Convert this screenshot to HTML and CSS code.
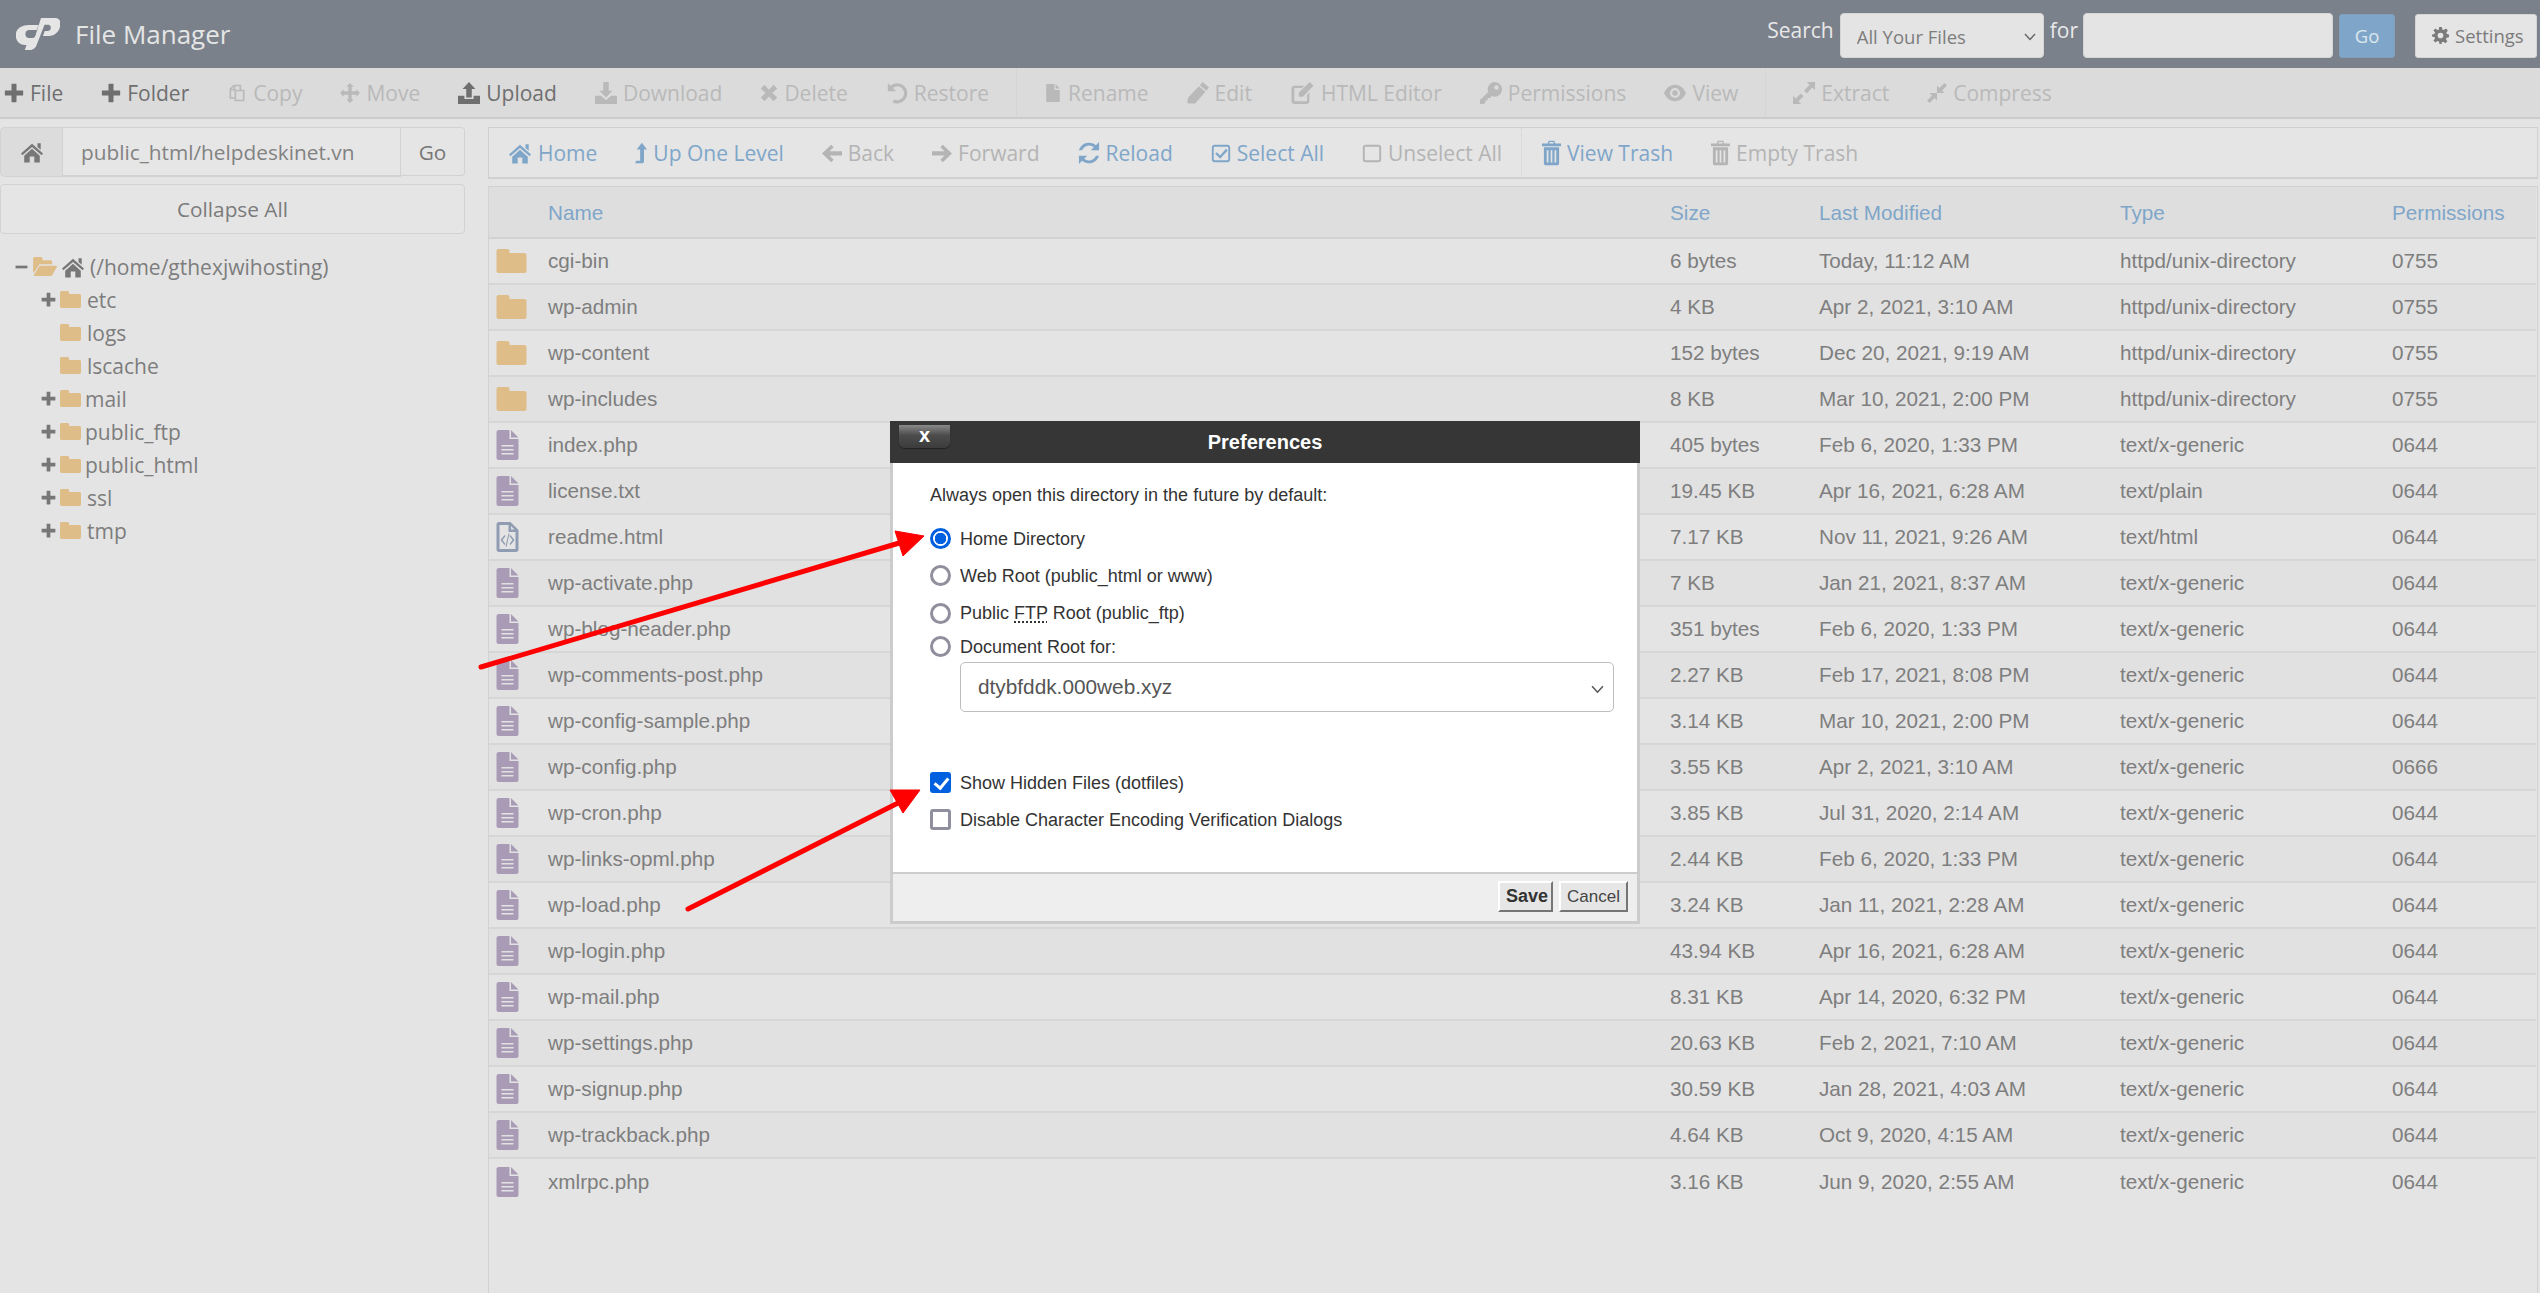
FILE: index.html
```html
<!DOCTYPE html>
<html lang="en">
<head>
<meta charset="utf-8">
<title>File Manager</title>
<link rel="stylesheet" href="styles.css">
</head>
<body>
<svg class="defs" width="0" height="0" aria-hidden="true">
  <symbol id="i-plus" viewBox="0 0 24 24"><path d="M9 1.5c0-.4.3-.5.6-.5h4.800c.3 0 .6.100.6.500V9h7.500c.3 0 .5.300.5.600v4.800c0 .3-.2.600-.5.600H15v7.500c0 .3-.3.500-.6.500H9.600c-.3 0-.6-.2-.6-.5V15H1.500c-.3 0-.5-.3-.5-.6V9.600c0-.3.200-.6.500-.6H9z"/></symbol>
  <symbol id="i-minus" viewBox="0 0 24 24"><path d="M1 9.500h22v5H1z"/></symbol>
  <symbol id="i-copy" viewBox="0 0 24 24"><path d="M9 2h8v6h4v14H9v-3H3V7l5-5zM8 4.500 5.500 7H8zM15 4h-5v5H5v8h4V8h6zM11 10v10h8V10z"/></symbol>
  <symbol id="i-move" viewBox="0 0 24 24"><path d="M12 0l4.500 4.500H14V10h5.500V7.500L24 12l-4.500 4.500V14H14v5.500h2.500L12 24l-4.500-4.500H10V14H4.500v2.500L0 12l4.500-4.500V10H10V4.500H7.500z"/></symbol>
  <symbol id="i-upload" viewBox="0 0 24 24"><path d="M12 0l7 7.500h-4V17H9V7.500H5zM0 15h7v3.500h10V15h7v9H0zM18 20.500h2v1.500h-2zM20.800 20.500h1.700v1.500h-1.700z"/></symbol>
  <symbol id="i-download" viewBox="0 0 24 24"><path d="M9 0h6v9.500h4L12 17 5 9.500h4zM0 15h6.500l5.500 5 5.500-5H24v9H0zM18 20.500h2v1.500h-2zM20.800 20.500h1.700v1.500h-1.700z"/></symbol>
  <symbol id="i-times" viewBox="0 0 24 24"><path d="M6 1l6 6.500L18 1l5 5-6.500 6 6.500 6-5 5-6-6.500L6 23l-5-5 6.500-6L1 6z"/></symbol>
  <symbol id="i-undo" viewBox="0 0 24 24"><path d="M2 1l3 3a11 11 0 1 1 2 18l2-3a7.500 7.500 0 1 0-1.500-12.500L11 10H2z"/></symbol>
  <symbol id="i-file" viewBox="0 0 24 24"><path d="M4 0h10v8h7v15a1 1 0 0 1-1 1H4a1 1 0 0 1-1-1V1a1 1 0 0 1 1-1zM15.500 0 21 6h-5.500z"/></symbol>
  <symbol id="i-pencil" viewBox="0 0 24 24"><path d="M17 0l7 6-3 3.500-7-6zM13 4.500l7 6-11 13H1.500L0 22l1.500-5.500z"/></symbol>
  <symbol id="i-edit" viewBox="0 0 24 24"><path d="M3 4h11l-2.500 2.500H4c-.5 0-1 .4-1 1V20c0 .6.500 1 1 1h12c.6 0 1-.4 1-1v-6l2.500-2.500V21c0 1.500-1.500 3-3 3H3c-1.500 0-3-1.500-3-3V7c0-1.500 1.500-3 3-3zM20 0l4 4-11.500 12H8v-4.500z"/></symbol>
  <symbol id="i-key" viewBox="0 0 24 24"><path d="M16 0a8 8 0 1 1-3 15.400L11 17.500H8.500V20H6v2.500L4 24H0v-4.500l9-8.500A8 8 0 0 1 16 0zm2 3.500a2.500 2.500 0 1 0 0 5 2.500 2.500 0 0 0 0-5z"/></symbol>
  <symbol id="i-eye" viewBox="0 0 24 24"><path fill-rule="evenodd" d="M12 3c6 0 10 4.500 12 9-2 4.500-6 9-12 9S2 16.500 0 12C2 7.500 6 3 12 3zm0 3.500a5.500 5.500 0 1 0 0 11 5.500 5.500 0 0 0 0-11zM12 9a3 3 0 1 1 0 6 3 3 0 0 1 0-6z"/></symbol>
  <symbol id="i-expand" viewBox="0 0 24 24"><path d="M24 0v9l-3-3-6 6.500-3-3L18 3l-3-3zM0 24v-9l3 3 5.500-5.500 3 3L6 21l3 3z"/></symbol>
  <symbol id="i-compress" viewBox="0 0 24 24"><path d="M12 3v9h9l-3-3 6-6-3-3-6 6zM12 12v9l-3-3-6 6-3-3 6-6-3-3z"/></symbol>
  <symbol id="i-home" viewBox="0 0 24 24"><path d="M12 3 24 13.500l-1.500 2L12 6.500 1.500 15.500 0 13.500zM18 2.500h3.500v7L18 6.500zM12 8.500l8.500 7.500v7.500h-6V17h-5v6.500h-6V16z"/></symbol>
  <symbol id="i-up" viewBox="0 0 14 24"><path d="M8 0l6 8h-3.500v13.500c0 1.500-1 2.500-2.500 2.500H0l1.500-3h4.500V8H2z"/></symbol>
  <symbol id="i-left" viewBox="0 0 24 24"><path d="M11 2l3 3-5 5h15v5H9l5 5-3 3L0 12.500z"/></symbol>
  <symbol id="i-right" viewBox="0 0 24 24"><path d="M13 2l-3 3 5 5H0v5h15l-5 5 3 3 11-10.500z"/></symbol>
  <symbol id="i-reload" viewBox="0 0 24 24"><path d="M23 0v9h-9l3.200-3.200A8 8 0 0 0 4.500 9H1A11.500 11.500 0 0 1 19.500 3.500zM1 24v-9h9l-3.200 3.200A8 8 0 0 0 19.500 15H23A11.500 11.500 0 0 1 4.500 20.500z"/></symbol>
  <symbol id="i-check" viewBox="0 0 24 24"><path d="M4 2h16c1.500 0 3 1.500 3 3v15c0 1.500-1.500 3-3 3H4c-1.500 0-3-1.500-3-3V5c0-1.500 1.500-3 3-3zm0 2.500c-.4 0-.7.300-.7.700V20c0 .3.300.6.700.6h16c.4 0 .7-.3.700-.6V5.200c0-.4-.3-.7-.7-.7zM18 7l2 2-9 10-6-6 2-2 4 4z"/></symbol>
  <symbol id="i-square" viewBox="0 0 24 24"><path d="M4 2h16c1.500 0 3 1.500 3 3v15c0 1.500-1.500 3-3 3H4c-1.500 0-3-1.500-3-3V5c0-1.500 1.500-3 3-3zm0 2.500c-.4 0-.7.300-.7.700V20c0 .3.300.6.700.6h16c.4 0 .7-.3.700-.6V5.200c0-.4-.3-.7-.7-.7z"/></symbol>
  <symbol id="i-trash" viewBox="0 0 20 26"><path d="M7 0h6l1 3h6v3H0V3h6zM8 1.500 7.600 3h4.800L12 1.500zM2 7h16v17c0 1-1 2-2 2H4c-1 0-2-1-2-2zM5 10v13h1.800V10zM9.100 10v13h1.800V10zM13.200 10v13H15V10z"/></symbol>
  <symbol id="i-gear" viewBox="0 0 24 24"><path fill-rule="evenodd" d="M10 0h4l.6 3.400 2.200.9L19.700 2l2.800 2.800-2.300 2.900.9 2.200L24 10.500v4l-3.400.6-.9 2.200 2 2.900-2.800 2.800-2.900-2.300-2.200.9L13.500 24h-3l-.6-3.400-2.200-.9L4.800 22 2 19.200l2.300-2.900-.9-2.200L0 13.500v-3l3.400-.6.900-2.200L2 4.800 4.800 2l2.900 2.300 2.200-.9zM12 8a4 4 0 1 0 0 8 4 4 0 0 0 0-8z"/></symbol>
  <symbol id="i-folder" viewBox="0 0 30 24"><path d="M2 0h9c1 0 2 1 2 2v2h15c1 0 2 1 2 2v16c0 1-1 2-2 2H2c-1 0-2-1-2-2V2C0 1 1 0 2 0z"/></symbol>
  <symbol id="i-folder-open" viewBox="0 0 30 24"><path d="M2 0h8c1 0 2 1 2 2v2h10c1 0 2 1 2 2v3H8L1 20 0 19V2C0 1 1 0 2 0zM9 11h20c1 0 1.500.8 1 1.500L24 23c-.3.600-1 1-1.500 1H2c-1 0-1.500-.7-1-1.500L7.500 12c.3-.6 1-1 1.500-1z"/></symbol>
  <symbol id="i-doc" viewBox="0 0 22 30"><path fill-rule="evenodd" d="M2 0h11v9h9v19c0 1-1 2-2 2H2c-1 0-2-1-2-2V2C0 1 1 0 2 0zM5 15v1.500h12V15zM5 19v1.500h12V19zM5 23v1.500h12V23zM14.500 0 22 7.500h-7.500z"/></symbol>
  <symbol id="i-code" viewBox="0 0 22 30"><path fill-rule="evenodd" d="M2.500 0H14l8 8v19.500c0 1.500-1 2.500-2.500 2.500h-17C1 30 0 29 0 27.500v-25C0 1 1 0 2.500 0zM3 3v24h16V10h-7V3zM14.500 4v3.500H18zM8 13l1 1-3 4 3 4-1 1-4-5zM14 13l4 5-4 5-1-1 3-4-3-4zM12 11.500l1 .3-3 13-1-.3z"/></symbol>
</svg>

<header class="topbar">
  <div class="brand">
    <svg class="logo" viewBox="0 0 44 32" aria-hidden="true"><path d="M13 7h9.500l-1.800 5h-7a4 4 0 0 0-.5 8h3.300c1.400 0 2.400-.8 2.800-2L25 0h13a6 6 0 0 1 6 9c-1.200 4.800-5.500 9-11 9H27l1.700-5H32a3.200 3.200 0 0 0 .7-6.200H28.500L21 26c-1 3.500-3.500 6-7 6H9l-.2-.1L10.500 27H9C3 27-1 22-.2 15.500.7 10.500 6 7 13 7z"/></svg>
    <span class="brand-name">File Manager</span>
  </div>
  <form class="search">
    <label class="search-label">Search</label>
    <span class="select-wrap top-select-wrap">
      <select class="top-select"><option>All Your Files</option></select>
      <svg class="chev" viewBox="0 0 12 8"><path d="M1 1l5 5.500L11 1" fill="none" stroke="currentColor" stroke-width="1.400"/></svg>
    </span>
    <label class="search-label">for</label>
    <input class="top-input" type="text">
    <button class="top-go" type="button">Go</button>
    <button class="settings" type="button"><svg class="ico gear"><use href="#i-gear"/></svg>Settings</button>
  </form>
</header>

<nav class="toolbar">
  <a class="tb on"><svg class="ico w20"><use href="#i-plus"/></svg>File</a>
  <a class="tb on"><svg class="ico w20"><use href="#i-plus"/></svg>Folder</a>
  <a class="tb"><svg class="ico w20 tall"><use href="#i-copy"/></svg>Copy</a>
  <a class="tb"><svg class="ico w20 tall mv"><use href="#i-move"/></svg>Move</a>
  <a class="tb on"><svg class="ico w22"><use href="#i-upload"/></svg>Upload</a>
  <a class="tb"><svg class="ico w22"><use href="#i-download"/></svg>Download</a>
  <a class="tb"><svg class="ico w18 mv"><use href="#i-times"/></svg>Delete</a>
  <a class="tb"><svg class="ico w22"><use href="#i-undo"/></svg>Restore</a>
  <span class="tb-sep"></span>
  <a class="tb"><svg class="ico w18 tall"><use href="#i-file"/></svg>Rename</a>
  <a class="tb"><svg class="ico w22"><use href="#i-pencil"/></svg>Edit</a>
  <a class="tb"><svg class="ico w25"><use href="#i-edit"/></svg>HTML Editor</a>
  <a class="tb"><svg class="ico w22 tall"><use href="#i-key"/></svg>Permissions</a>
  <a class="tb"><svg class="ico w22 mv"><use href="#i-eye"/></svg>View</a>
  <span class="tb-sep"></span>
  <a class="tb"><svg class="ico w22"><use href="#i-expand"/></svg>Extract</a>
  <a class="tb"><svg class="ico w20"><use href="#i-compress"/></svg>Compress</a>
</nav>

<main class="layout">
  <aside class="side">
    <div class="path">
      <span class="path-home"><svg class="ico w24"><use href="#i-home"/></svg></span>
      <input class="path-input" type="text" value="public_html/helpdeskinet.vn">
      <button class="path-go" type="button">Go</button>
    </div>
    <button class="collapse" type="button">Collapse All</button>
    <ul class="tree">
      <li class="tree-root"><svg class="ico tw"><use href="#i-minus"/></svg><svg class="fold-open"><use href="#i-folder-open"/></svg><svg class="ico w24 root-home"><use href="#i-home"/></svg><span>(/home/gthexjwihosting)</span></li>
      <li class="tree-item"><svg class="ico tw"><use href="#i-plus"/></svg><svg class="fold"><use href="#i-folder"/></svg><span class="nudge">etc</span></li>
      <li class="tree-item"><span class="tw-gap"></span><svg class="fold"><use href="#i-folder"/></svg><span class="nudge">logs</span></li>
      <li class="tree-item"><span class="tw-gap"></span><svg class="fold"><use href="#i-folder"/></svg><span class="nudge">lscache</span></li>
      <li class="tree-item"><svg class="ico tw"><use href="#i-plus"/></svg><svg class="fold"><use href="#i-folder"/></svg><span>mail</span></li>
      <li class="tree-item"><svg class="ico tw"><use href="#i-plus"/></svg><svg class="fold"><use href="#i-folder"/></svg><span>public_ftp</span></li>
      <li class="tree-item"><svg class="ico tw"><use href="#i-plus"/></svg><svg class="fold"><use href="#i-folder"/></svg><span>public_html</span></li>
      <li class="tree-item"><svg class="ico tw"><use href="#i-plus"/></svg><svg class="fold"><use href="#i-folder"/></svg><span class="nudge">ssl</span></li>
      <li class="tree-item"><svg class="ico tw"><use href="#i-plus"/></svg><svg class="fold"><use href="#i-folder"/></svg><span class="nudge">tmp</span></li>
    </ul>
  </aside>

  <section class="content">
    <nav class="actions">
      <a class="ac blue"><svg class="ico w24"><use href="#i-home"/></svg>Home</a>
      <a class="ac blue"><svg class="ico up"><use href="#i-up"/></svg>Up One Level</a>
      <a class="ac"><svg class="ico w20"><use href="#i-left"/></svg>Back</a>
      <a class="ac"><svg class="ico w20"><use href="#i-right"/></svg>Forward</a>
      <a class="ac blue"><svg class="ico w22"><use href="#i-reload"/></svg>Reload</a>
      <a class="ac blue"><svg class="ico w20"><use href="#i-check"/></svg>Select All</a>
      <a class="ac"><svg class="ico w20"><use href="#i-square"/></svg>Unselect All</a>
      <span class="ac-sep"></span>
      <a class="ac blue"><svg class="ico w20 tr"><use href="#i-trash"/></svg>View Trash</a>
      <a class="ac"><svg class="ico w20 tr"><use href="#i-trash"/></svg>Empty Trash</a>
    </nav>
    <div class="table-box">
      <table class="files">
        <colgroup><col class="c-icon"><col class="c-name"><col class="c-size"><col class="c-mod"><col class="c-type"><col></colgroup>
        <thead><tr><th></th><th>Name</th><th>Size</th><th>Last Modified</th><th>Type</th><th>Permissions</th></tr></thead>
        <tbody>
          <tr><td><svg class="f-dir"><use href="#i-folder"/></svg></td><td>cgi-bin</td><td>6 bytes</td><td>Today, 11:12 AM</td><td>httpd/unix-directory</td><td>0755</td></tr>
          <tr><td><svg class="f-dir"><use href="#i-folder"/></svg></td><td>wp-admin</td><td>4 KB</td><td>Apr 2, 2021, 3:10 AM</td><td>httpd/unix-directory</td><td>0755</td></tr>
          <tr><td><svg class="f-dir"><use href="#i-folder"/></svg></td><td>wp-content</td><td>152 bytes</td><td>Dec 20, 2021, 9:19 AM</td><td>httpd/unix-directory</td><td>0755</td></tr>
          <tr><td><svg class="f-dir"><use href="#i-folder"/></svg></td><td>wp-includes</td><td>8 KB</td><td>Mar 10, 2021, 2:00 PM</td><td>httpd/unix-directory</td><td>0755</td></tr>
          <tr><td><svg class="f-doc"><use href="#i-doc"/></svg></td><td>index.php</td><td>405 bytes</td><td>Feb 6, 2020, 1:33 PM</td><td>text/x-generic</td><td>0644</td></tr>
          <tr><td><svg class="f-doc"><use href="#i-doc"/></svg></td><td>license.txt</td><td>19.45 KB</td><td>Apr 16, 2021, 6:28 AM</td><td>text/plain</td><td>0644</td></tr>
          <tr><td><svg class="f-code"><use href="#i-code"/></svg></td><td>readme.html</td><td>7.17 KB</td><td>Nov 11, 2021, 9:26 AM</td><td>text/html</td><td>0644</td></tr>
          <tr><td><svg class="f-doc"><use href="#i-doc"/></svg></td><td>wp-activate.php</td><td>7 KB</td><td>Jan 21, 2021, 8:37 AM</td><td>text/x-generic</td><td>0644</td></tr>
          <tr><td><svg class="f-doc"><use href="#i-doc"/></svg></td><td>wp-blog-header.php</td><td>351 bytes</td><td>Feb 6, 2020, 1:33 PM</td><td>text/x-generic</td><td>0644</td></tr>
          <tr><td><svg class="f-doc"><use href="#i-doc"/></svg></td><td>wp-comments-post.php</td><td>2.27 KB</td><td>Feb 17, 2021, 8:08 PM</td><td>text/x-generic</td><td>0644</td></tr>
          <tr><td><svg class="f-doc"><use href="#i-doc"/></svg></td><td>wp-config-sample.php</td><td>3.14 KB</td><td>Mar 10, 2021, 2:00 PM</td><td>text/x-generic</td><td>0644</td></tr>
          <tr><td><svg class="f-doc"><use href="#i-doc"/></svg></td><td>wp-config.php</td><td>3.55 KB</td><td>Apr 2, 2021, 3:10 AM</td><td>text/x-generic</td><td>0666</td></tr>
          <tr><td><svg class="f-doc"><use href="#i-doc"/></svg></td><td>wp-cron.php</td><td>3.85 KB</td><td>Jul 31, 2020, 2:14 AM</td><td>text/x-generic</td><td>0644</td></tr>
          <tr><td><svg class="f-doc"><use href="#i-doc"/></svg></td><td>wp-links-opml.php</td><td>2.44 KB</td><td>Feb 6, 2020, 1:33 PM</td><td>text/x-generic</td><td>0644</td></tr>
          <tr><td><svg class="f-doc"><use href="#i-doc"/></svg></td><td>wp-load.php</td><td>3.24 KB</td><td>Jan 11, 2021, 2:28 AM</td><td>text/x-generic</td><td>0644</td></tr>
          <tr><td><svg class="f-doc"><use href="#i-doc"/></svg></td><td>wp-login.php</td><td>43.94 KB</td><td>Apr 16, 2021, 6:28 AM</td><td>text/x-generic</td><td>0644</td></tr>
          <tr><td><svg class="f-doc"><use href="#i-doc"/></svg></td><td>wp-mail.php</td><td>8.31 KB</td><td>Apr 14, 2020, 6:32 PM</td><td>text/x-generic</td><td>0644</td></tr>
          <tr><td><svg class="f-doc"><use href="#i-doc"/></svg></td><td>wp-settings.php</td><td>20.63 KB</td><td>Feb 2, 2021, 7:10 AM</td><td>text/x-generic</td><td>0644</td></tr>
          <tr><td><svg class="f-doc"><use href="#i-doc"/></svg></td><td>wp-signup.php</td><td>30.59 KB</td><td>Jan 28, 2021, 4:03 AM</td><td>text/x-generic</td><td>0644</td></tr>
          <tr><td><svg class="f-doc"><use href="#i-doc"/></svg></td><td>wp-trackback.php</td><td>4.64 KB</td><td>Oct 9, 2020, 4:15 AM</td><td>text/x-generic</td><td>0644</td></tr>
          <tr><td><svg class="f-doc"><use href="#i-doc"/></svg></td><td>xmlrpc.php</td><td>3.16 KB</td><td>Jun 9, 2020, 2:55 AM</td><td>text/x-generic</td><td>0644</td></tr>
        </tbody>
      </table>
    </div>
  </section>
</main>

<div class="dialog">
  <div class="dlg-head">
    <button class="dlg-close" type="button">x</button>
    <span class="dlg-title">Preferences</span>
  </div>
  <div class="dlg-body">
    <p class="dlg-lead">Always open this directory in the future by default:</p>
    <label class="opt"><input type="radio" name="dir" checked><span>Home Directory</span></label>
    <label class="opt"><input type="radio" name="dir"><span>Web Root (public_html or www)</span></label>
    <label class="opt"><input type="radio" name="dir"><span>Public <abbr>FTP</abbr> Root (public_ftp)</span></label>
    <label class="opt opt-doc"><input type="radio" name="dir"><span>Document Root for:</span></label>
    <span class="select-wrap dlg-select-wrap">
      <select class="dlg-select"><option>dtybfddk.000web.xyz</option></select>
      <svg class="chev dlg-chev" viewBox="0 0 12 8"><path d="M1 1l5 5.500L11 1" fill="none" stroke="currentColor" stroke-width="1.400"/></svg>
    </span>
    <label class="opt opt-show"><input type="checkbox" checked><span>Show Hidden Files (dotfiles)</span></label>
    <label class="opt"><input type="checkbox"><span>Disable Character Encoding Verification Dialogs</span></label>
  </div>
  <div class="dlg-foot">
    <button class="dlg-btn dlg-save" type="button">Save</button>
    <button class="dlg-btn" type="button">Cancel</button>
  </div>
</div>

<svg class="arrows" width="2540" height="1293" viewBox="0 0 2540 1293" aria-hidden="true">
  <g class="arrow">
    <path class="shaft" d="M481 667 906 541"/>
    <path class="head" d="M895 531 924 536 903 556z"/>
    <path class="shaft" d="M688 909 900 802"/>
    <path class="head" d="M890 790 920 790 903 813z"/>
  </g>
</svg>
</body>
</html>
```

FILE: styles.css
```css
* { box-sizing: border-box; }
html, body { margin: 0; height: 1293px; overflow: hidden; }
body {
  position: relative;
  background: #e4e4e4;
  color: #7b7b7b;
  font-family: "Open Sans", "Liberation Sans", sans-serif;
  font-size: 20px;
}
.defs { position: absolute; }
.ico { fill: currentColor; flex: none; height: 22px; display: block; }
a { text-decoration: none; }

/* top bar */
.topbar {
  height: 68px;
  background: #7a818b;
  display: flex;
  align-items: center;
  justify-content: space-between;
  padding: 0 3px 0 16px;
}
.brand { display: flex; align-items: center; gap: 15px; }
.logo { width: 44px; height: 32px; fill: #e5e5e5; }
.brand-name { color: #e5e5e5; font-size: 26px; line-height: 34px; }
.search { display: flex; align-items: center; height: 45px; margin-top: 3px; }
.search-label { color: #e8e8e8; font-size: 21px; position: relative; top: -6px; }
.select-wrap { position: relative; display: block; }
.top-select-wrap { margin: 0 6px; }
.top-select, .dlg-select { appearance: none; display: block; }
.top-select {
  width: 204px; height: 45px; padding: 2px 0 0 16px;
  background: #e4e4e4; border: 1px solid #d5d5d5; border-radius: 4px;
  color: #7d7d7d; font: 18.500px "Open Sans", sans-serif;
}
.chev { position: absolute; width: 12px; height: 8px; color: #666; top: 20px; right: 8px; }
.top-input {
  width: 250px; height: 45px; margin-left: 5px;
  background: #e4e4e4; border: 1px solid #d5d5d5; border-radius: 4px;
}
.top-go {
  width: 56px; height: 44px; margin-left: 6px;
  background: #7fa6c9; border: 1px solid #7fa0c0; border-radius: 3px;
  color: #dce6ef; font: 18.500px "Open Sans", sans-serif;
}
.settings {
  width: 122px; height: 44px; margin-left: 20px;
  display: flex; align-items: center; gap: 6px; padding: 0 0 0 16px;
  background: #e5e5e5; border: 1px solid #d5d5d5; border-radius: 3px;
  color: #7b7b7b; font: 18.500px "Open Sans", sans-serif;
}
.gear { width: 17px; height: 19px; }

/* toolbar */
.toolbar {
  height: 51px;
  background: #dbdbdb;
  border-bottom: 2px solid #cbcbcb;
  display: flex;
  align-items: center;
  gap: 38px;
  padding: 0 0 0 4px;
  font-size: 21px;
}
.tb { display: flex; align-items: center; gap: 6px; color: #b9b9b9; }
.tb.on { color: #6f6f6f; }
.tb-sep { width: 0; height: 49px; border-left: 1px dotted #cfcfcf; margin: 0 -11px; }
.w18 { width: 18px; } .w20 { width: 20px; } .w22 { width: 22px; } .w24 { width: 24px; } .w25 { width: 25px; }
.tall { height: 24px; }
.mv { position: relative; }

/* layout */
.layout {
  display: grid;
  grid-template-columns: 465px 1fr;
  gap: 23px;
  padding: 8px 2px 0 0;
  height: 1174px;
}
.side { min-width: 0; }
.path { display: flex; height: 50px; }
.path-home {
  width: 62px; display: flex; align-items: center; justify-content: center;
  background: #dcdcdc; border: 1px solid #d2d2d2; border-right: 0; border-radius: 5px 0 0 5px; color: #777;
}
.path-input {
  width: 339px; padding: 0 0 0 18px; border: 1px solid #d2d2d2; border-width: 1px 1px 2px 1px;
  background: #e6e6e6; color: #828282; font: 20.800px "Open Sans", sans-serif;
}
.path-go {
  width: 64px; height: 49px; padding: 0;
  background: #e5e5e5; border: 1px solid #d2d2d2; border-left: 0; border-radius: 0 4px 4px 0;
  color: #777; font: 20.800px "Open Sans", sans-serif;
}
.collapse {
  display: block; width: 465px; height: 50px; margin-top: 7px; padding: 0;
  background: #e5e5e5; border: 1px solid #d2d2d2; border-radius: 4px;
  color: #7b7b7b; font: 20.800px "Open Sans", sans-serif;
}
.tree { list-style: none; margin: 16px 0 0; padding: 0 0 0 15px; font-size: 21px; color: #7d7d7d; }
.tree li { display: flex; align-items: center; height: 33px; }
.tree-root .tw { width: 13px; height: 14px; }
.tw { color: #777; }
.tree-item { padding-left: 26px; }
.tree-item .tw { width: 15px; height: 15px; margin-right: 4px; }
.tw-gap { width: 19px; }
.fold { width: 21px; height: 17px; fill: #dfbd89; flex: none; margin-right: 4px; }
.nudge { margin-left: 2px; }
.fold-open { width: 24px; height: 19px; fill: #dfbd89; margin: 0 4px 0 5px; flex: none; }
.root-home { margin-right: 5px; color: #777; }

/* actions */
.content { display: flex; flex-direction: column; gap: 7px; min-width: 0; height: 100%; }
.actions {
  height: 52px; flex: none;
  display: flex; align-items: center; gap: 38px;
  padding: 0 0 0 19px;
  border: 1px solid #d0d0d0; border-width: 1px 1px 2px 1px;
  background: #e5e5e5;
  font-size: 21px;
}
.ac { display: flex; align-items: center; gap: 6px; color: #b4b4b4; white-space: nowrap; }
.ac.blue { color: #7fa6c9; }
.ac .up { width: 12px; height: 24px; }
.ac .tr { height: 26px; width: 19px; }
.ac-sep { width: 0; height: 50px; border-left: 1px dotted #d2d2d2; margin: 0 -18px 0 -19px; }

/* table */
.table-box {
  flex: 1;
  border: 1px solid #d2d2d2;
  border-bottom: 0;
  background: #e4e4e4;
  padding-right: 1px;
}
.files {
  width: 100%;
  table-layout: fixed;
  border-collapse: collapse;
  font-family: "Liberation Sans", Arial, sans-serif;
  font-size: 20.700px;
  color: #7e7e7e;
}
.c-icon { width: 59px; } .c-name { width: 1122px; } .c-size { width: 149px; } .c-mod { width: 301px; } .c-type { width: 272px; }
.files th {
  height: 51px; padding: 2px 0 0; text-align: left; font-weight: 400;
  color: #7fa6c9; background: #dedede; border-bottom: 2px solid #d2d2d2;
}
.files td { height: 46px; padding: 0; border-bottom: 2px solid #d6d6d6; }
.files tr:last-child td { border-bottom: 0; }
.files tbody tr:nth-child(even) { background: #e1e1e1; }
.files td:first-child { padding-left: 7px; }
.files svg { display: block; }
.f-dir { width: 31px; height: 24px; fill: #dfbd89; }
.f-doc { width: 23px; height: 30px; fill: #a99bb6; }
.f-code { width: 23px; height: 30px; fill: #8f9cb2; }

/* dialog */
.dialog {
  position: absolute; left: 890px; top: 421px; width: 750px; height: 503px;
  display: flex; flex-direction: column;
  background: #fff;
  font-family: "Liberation Sans", Arial, sans-serif;
  color: #333;
  border: 3px solid #ccc; border-top: 0;
}
.dlg-head {
  height: 42px; flex: none; margin: 0 -3px;
  background: #363636; position: relative;
  display: flex; align-items: center; justify-content: center;
}
.dlg-title { color: #fff; font-size: 20px; font-weight: 700; margin-left: 0; }
.dlg-close {
  position: absolute; left: 9px; top: 4px; width: 51px; height: 23px; padding: 0 0 6px;
  border: 0; border-radius: 0 0 6px 6px;
  background: linear-gradient(#8a8a8a, #4c4c4c 45%, #3c3c3c);
  box-shadow: 0 1px 1px #222;
  color: #fff; font: 700 20px/1 "Liberation Sans", sans-serif;
}
.dlg-body { flex: 1; padding: 21px 0 0 37px; font-size: 18px; position: relative; }
.dlg-lead { margin: 0 0 14px; line-height: 22px; }
.opt { display: flex; align-items: center; gap: 9px; height: 37.300px; line-height: 22px; }
.opt input {
  appearance: none; width: 21px; height: 21px; margin: 0; flex: none;
  border: 3px solid #8f8f9d; background: #fff; position: relative;
}
.opt input[type=radio] { border-radius: 50%; }
.opt input[type=checkbox] { border-radius: 3px; }
.opt input[type=radio]:checked { border-color: #0060df; background: radial-gradient(circle, #0060df 0 5.500px, #fff 6px); }
.opt input[type=checkbox]:checked { border-color: #0060df; background: #0060df; }
.opt input[type=checkbox]:checked::after {
  content: ""; position: absolute; left: 4px; top: 0; width: 6px; height: 11px;
  border: solid #fff; border-width: 0 3px 3px 0; transform: rotate(40deg);
}
abbr { text-decoration: underline dotted; text-underline-offset: 2px; }
.opt-doc { height: 30px; }
.dlg-select-wrap { margin-left: 30px; width: 654px; }
.dlg-select {
  width: 654px; height: 50px; padding: 0 0 0 17px;
  background: #fff; border: 1px solid #bdbdbd; border-radius: 5px;
  color: #555; font: 20.800px "Liberation Sans", sans-serif;
}
.dlg-chev { top: 23px; right: 10px; color: #555; width: 13px; height: 9px; }
.opt-show { margin-top: 52px; }
.dlg-foot {
  height: 49px; flex: none;
  background: #eee; border-top: 2px solid #ccc;
  display: flex; align-items: flex-start; justify-content: flex-end; gap: 6px;
  padding: 7px 9px 0 0;
}
.dlg-btn {
  height: 31px; padding: 0 6px;
  background: #e6e6e6;
  border: 2px solid; border-color: #fff #757575 #757575 #fff;
  color: #444; font: 17px "Liberation Sans", sans-serif;
}
.dlg-save { font-weight: 700; font-size: 18px; color: #333; width: 55px; }

/* annotation arrows */
.arrows { position: absolute; left: 0; top: 0; pointer-events: none; }
.shaft { stroke: #f00; stroke-width: 5px; stroke-linecap: round; fill: none; }
.head { fill: #f00; stroke: #f00; stroke-width: 1px; stroke-linejoin: round; }
```
